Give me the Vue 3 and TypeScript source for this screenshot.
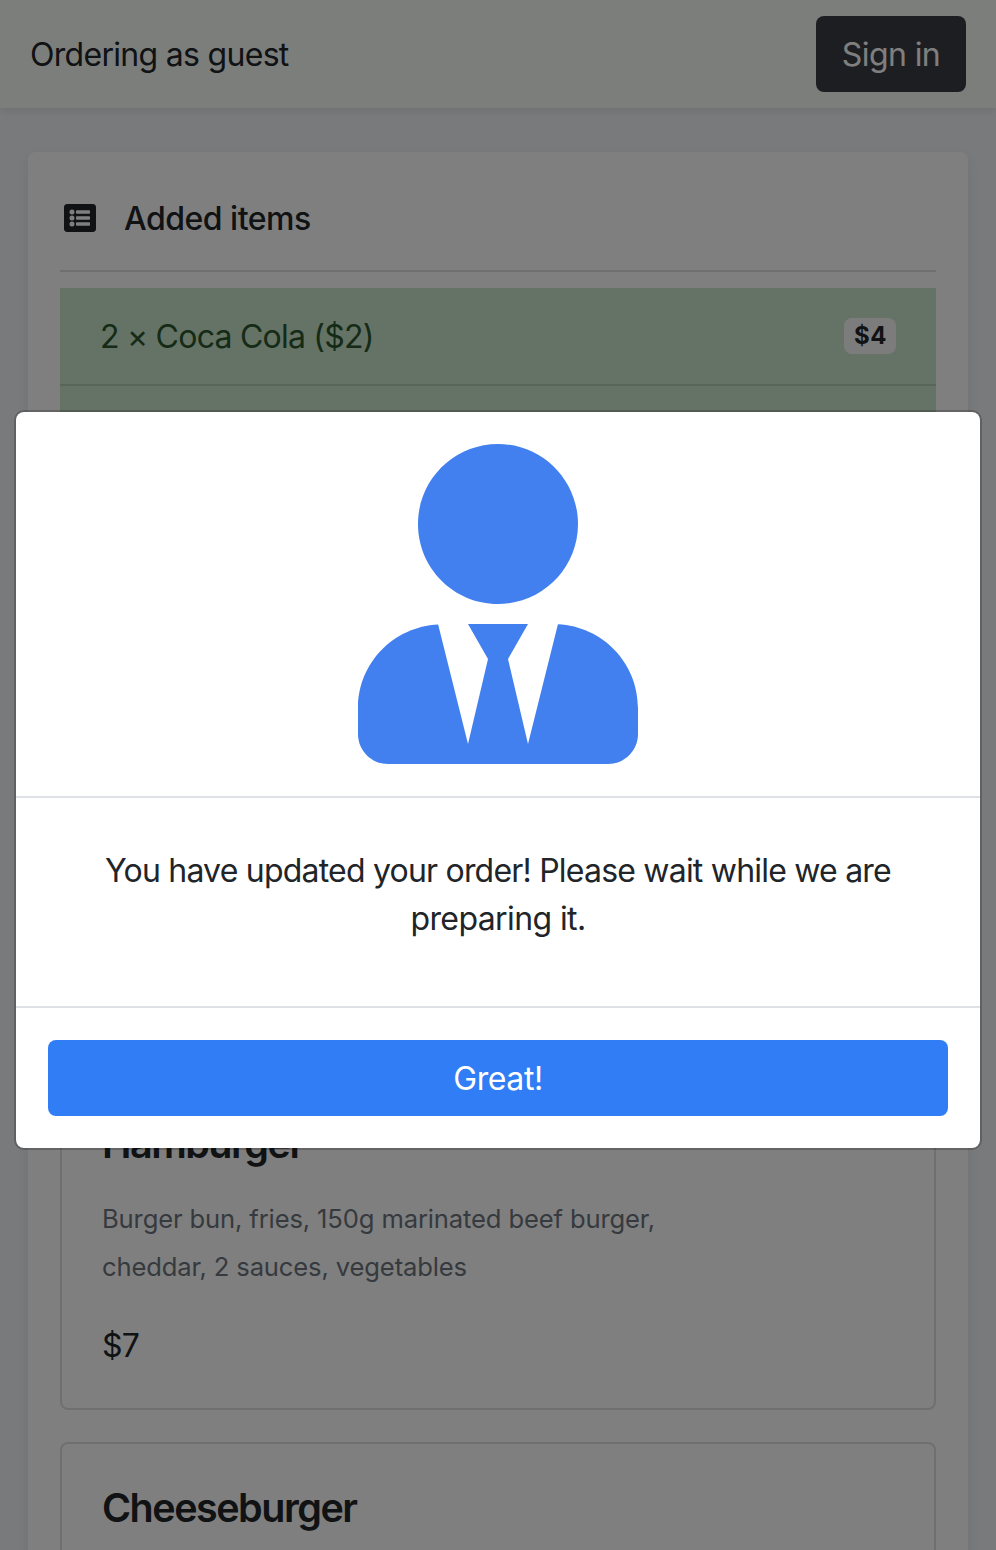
<script setup lang="ts">
interface OrderLine {
  label: string
  total: string
}
interface Dish {
  name: string
  description: string[]
  price: string
}

const added: OrderLine[] = [{ label: '2 × Coca Cola ($2)', total: '$4' }]
const menu: Dish[] = [
  {
    name: 'Hamburger',
    description: ['Burger bun, fries, 150g marinated beef burger,', 'cheddar, 2 sauces, vegetables'],
    price: '$7',
  },
  { name: 'Cheeseburger', description: [], price: '' },
]
</script>

<template>
  <div class="page">
    <header class="navbar">
      <span class="guest">Ordering as guest</span>
      <button class="btn btn-dark" type="button">Sign in</button>
    </header>

    <main class="panel">
      <div class="panel-head">
        <svg class="list-icon" viewBox="0 0 512 512" fill="currentColor" fill-rule="evenodd">
          <path
            d="M464 480H48c-26.5 0-48-21.5-48-48V80c0-26.5 21.5-48 48-48h416c26.5 0 48 21.5 48 48v352c0 26.5-21.5 48-48 48zM128 120a40 40 0 1 0 0 80 40 40 0 1 0 0-80zm0 96a40 40 0 1 0 0 80 40 40 0 1 0 0-80zm0 96a40 40 0 1 0 0 80 40 40 0 1 0 0-80zM416 176v-32c0-6.6-5.4-12-12-12H204c-6.6 0-12 5.4-12 12v32c0 6.6 5.4 12 12 12h200c6.6 0 12-5.4 12-12zm0 96v-32c0-6.6-5.4-12-12-12H204c-6.6 0-12 5.4-12 12v32c0 6.6 5.4 12 12 12h200c6.6 0 12-5.4 12-12zm0 96v-32c0-6.6-5.4-12-12-12H204c-6.6 0-12 5.4-12 12v32c0 6.6 5.4 12 12 12h200c6.6 0 12-5.4 12-12z"
          />
        </svg>
        <span class="panel-title">Added items</span>
      </div>

      <ul class="order">
        <li v-for="line in added" :key="line.label" class="order-row">
          <span class="order-label">{{ line.label }}</span>
          <span class="badge">{{ line.total }}</span>
        </li>
        <li class="order-row"></li>
      </ul>

      <section class="menu">
        <article v-for="dish in menu" :key="dish.name" class="dish">
          <h5 class="dish-name">{{ dish.name }}</h5>
          <p class="dish-text">
            <span v-for="text in dish.description" :key="text" class="dish-line">{{ text }}</span>
          </p>
          <div class="dish-price">{{ dish.price }}</div>
        </article>
      </section>
    </main>

    <div class="backdrop">
      <div class="modal" role="dialog">
        <div class="modal-head">
          <svg class="user-icon" viewBox="0 0 448 512" fill="currentColor">
            <path
              d="M224 256c70.7 0 128-57.3 128-128S294.7 0 224 0 96 57.3 96 128s57.3 128 128 128zm95.8 32.6L272 480l-32-136 32-56h-96l32 56-32 136-47.8-191.4C56.9 292 0 350.3 0 422.4V464c0 26.5 21.5 48 48 48h352c26.5 0 48-21.5 48-48v-41.6c0-72.1-56.9-130.4-128.2-133.8z"
            />
          </svg>
        </div>
        <div class="modal-body">
          <p class="msg first">You have updated your order! Please wait while we are</p>
          <p class="msg">preparing it.</p>
        </div>
        <div class="modal-foot">
          <button class="btn btn-primary" type="button">Great!</button>
        </div>
      </div>
    </div>
  </div>
</template>

<style>
body {
  margin: 0;
  background: #f3f5f8;
}
</style>

<style scoped>
.page {
  position: relative;
  height: 1550px;
  overflow: hidden;
  background: #f3f5f8;
  color: #212529;
  font-family: Inter, 'Liberation Sans', sans-serif;
  font-size: 32px;
  line-height: 48px;
}
.navbar {
  position: relative;
  display: flex;
  align-items: center;
  justify-content: space-between;
  box-sizing: border-box;
  height: 108px;
  padding: 0 30px;
  background: #f8fcf9;
  box-shadow: 0 4px 8px rgba(0, 0, 0, 0.075);
}
.guest {
  padding-top: 2px;
  letter-spacing: -0.7px;
}
.btn {
  box-sizing: border-box;
  height: 76px;
  padding: 2px 0 0;
  border: 0;
  border-radius: 8px;
  color: #fff;
  font: inherit;
  text-align: center;
}
.btn-dark {
  width: 150px;
  background: #3a3c44;
  letter-spacing: -0.6px;
}
.panel {
  box-sizing: border-box;
  margin: 44px 28px 0;
  padding: 32px;
  height: 1450px;
  border-radius: 8px;
  background: #fff;
  box-shadow: 0 4px 16px rgba(0, 0, 0, 0.075);
}
.panel-head {
  display: flex;
  align-items: center;
  box-sizing: border-box;
  height: 88px;
  padding: 0 4px 18px;
  border-bottom: 2px solid #dfdfdf;
}
.list-icon {
  width: 32px;
  height: 32px;
  margin-right: 28px;
}
.panel-title {
  padding-top: 2px;
  font-weight: 500;
  letter-spacing: -0.5px;
}
.order {
  margin: 16px 0 0;
  padding: 0;
  list-style: none;
}
.order-row {
  display: flex;
  align-items: center;
  justify-content: space-between;
  height: 96px;
  padding: 0 40px;
  border-bottom: 2px solid #b2c8b7;
  background: #cbe5cd;
  color: #2b572d;
}
.order-label {
  padding-top: 2px;
  letter-spacing: -0.77px;
}
.badge {
  box-sizing: border-box;
  width: 52px;
  height: 36px;
  padding-left: 1px;
  border-radius: 8px;
  background: #f8f9fa;
  color: #212529;
  font-size: 24px;
  font-weight: 700;
  line-height: 36px;
  letter-spacing: 0.6px;
  text-align: center;
}
.menu {
  display: flex;
  flex-direction: column;
  gap: 32px;
  margin-top: 594px;
}
.dish {
  box-sizing: border-box;
  height: 332px;
  padding: 40px;
  border: 2px solid #dfdfdf;
  border-radius: 8px;
}
.dish-name {
  margin: 0 0 27px;
  font-size: 39.5px;
  font-weight: 570;
  line-height: 49px;
  height: 48px;
  letter-spacing: -1.5px;
}
.dish-text {
  margin: 0 0 30px;
  color: #6c757d;
  font-size: 25.6px;
  line-height: 48px;
  letter-spacing: -0.14px;
}
.dish-line {
  display: block;
}
.dish-price {
  padding-top: 1px;
  letter-spacing: -0.8px;
}
.backdrop {
  position: absolute;
  inset: 0;
  background: rgba(0, 0, 0, 0.5);
}
.modal {
  box-sizing: border-box;
  width: 968px;
  margin: 410px auto 0;
  border: 2px solid rgba(0, 0, 0, 0.2);
  border-radius: 10px;
  background: #fff;
  background-clip: padding-box;
}
.modal-head {
  display: flex;
  justify-content: center;
  padding: 32px;
  border-bottom: 2px solid #dee2e6;
}
.user-icon {
  width: 280px;
  height: 320px;
  color: #4180ee;
}
.modal-body {
  box-sizing: border-box;
  height: 208px;
  padding-top: 49px;
  text-align: center;
}
.msg {
  margin: 0;
  letter-spacing: -0.6px;
}
.first {
  letter-spacing: -0.79px;
}
.modal-foot {
  padding: 32px;
  border-top: 2px solid #dee2e6;
}
.btn-primary {
  display: block;
  width: 100%;
  background: #307df6;
  letter-spacing: -0.4px;
}
</style>
